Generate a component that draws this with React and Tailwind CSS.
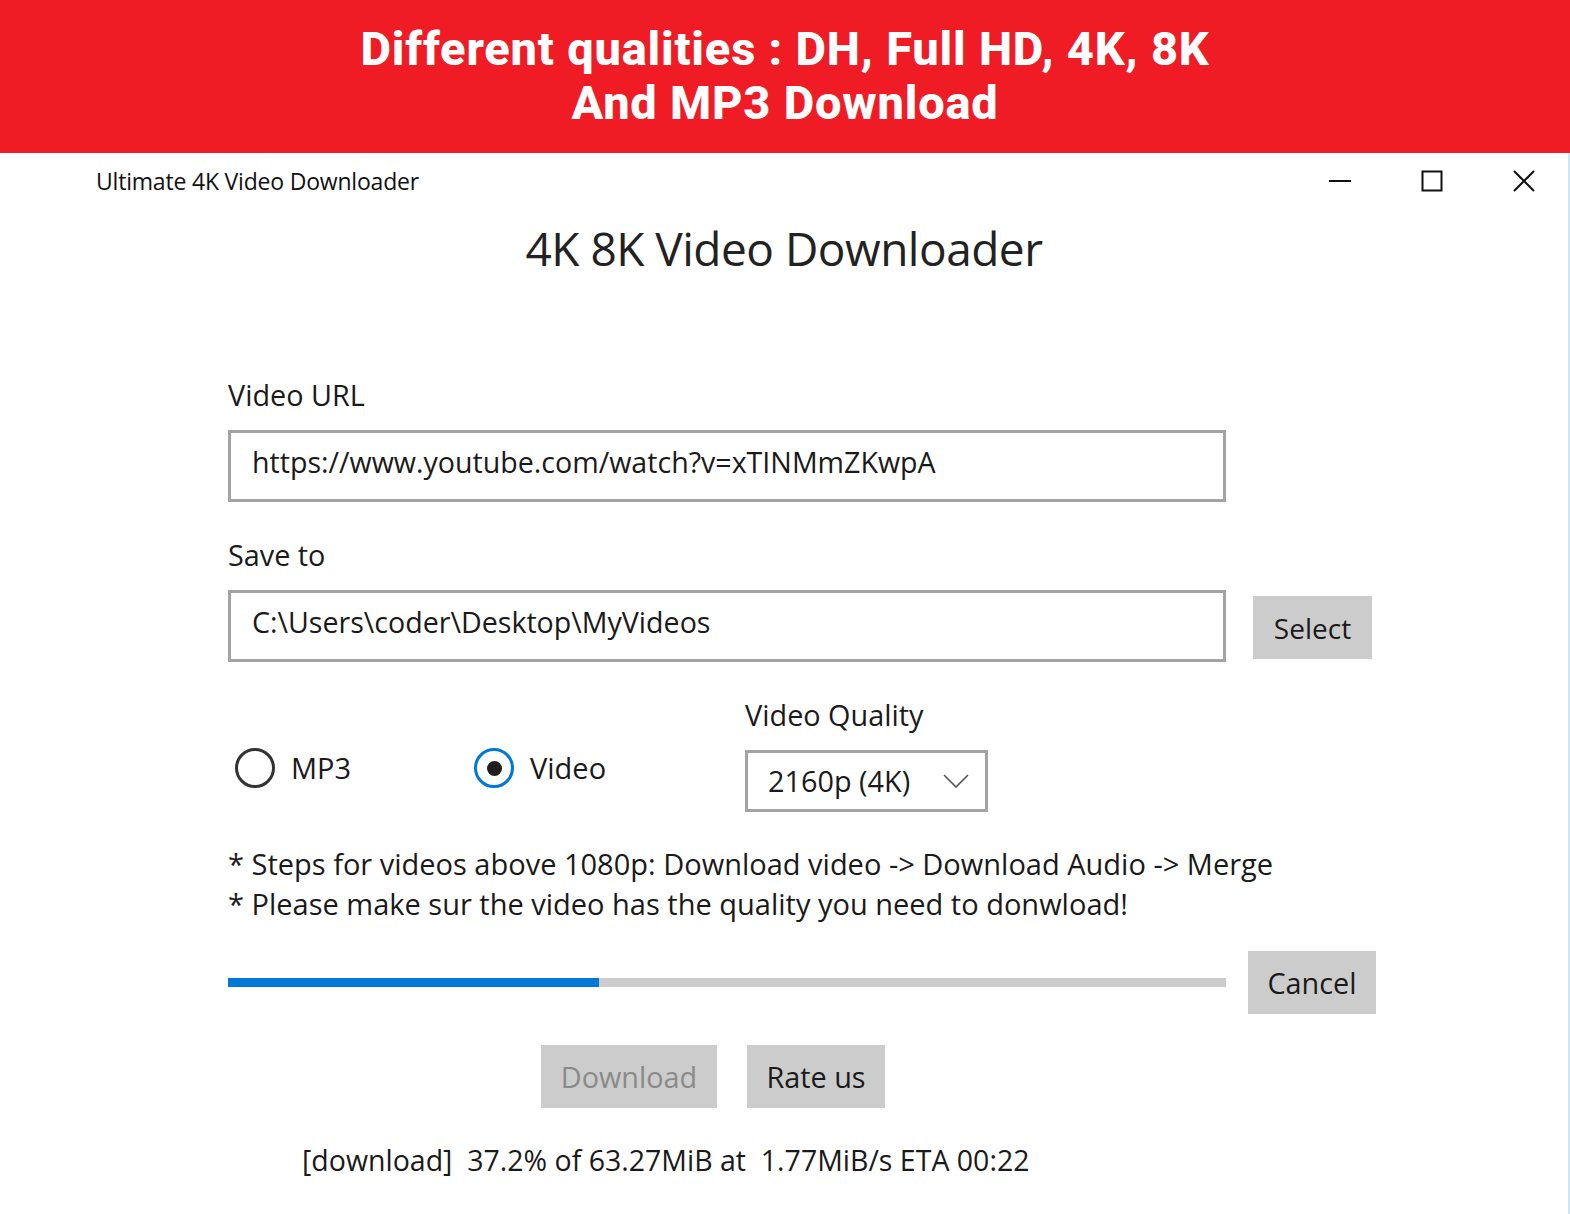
import React, { useState } from "react";

const Radio = ({ checked, label, onClick }) => (
  <label onClick={onClick} className="flex items-center gap-[16px] cursor-pointer">
    <span
      className={`${
        checked ? "border-[#0078d7]" : "border-[#333333]"
      } w-[40px] h-[40px] rounded-full border-[3px] flex items-center justify-center bg-white`}
    >
      {checked && <span className="w-[15px] h-[15px] rounded-full bg-[#1f1f1f]" />}
    </span>
    <span className="text-[29px] text-[#1a1a1a]">{label}</span>
  </label>
);

const App = () => {
  const [format, setFormat] = useState("video");
  const progress = 37.2;

  return (
    <div className="w-[1570px] h-[1214px] bg-white font-['Open_Sans','Noto_Sans',sans-serif] text-[#1a1a1a] overflow-hidden">
      {/* banner */}
      <div className="h-[153px] bg-[#ef1c26] flex flex-col items-center justify-center pb-[2px]">
        <div className="text-white font-['Roboto',sans-serif] font-extrabold text-[47px] leading-[54px] text-center tracking-[0.8px]">
          Different qualities : DH, Full HD, 4K, 8K
          <br />
          And MP3 Download
        </div>
      </div>

      {/* window */}
      <div className="h-[1061px] border-r-2 border-[#cde6f5] flex flex-col">
        {/* title bar */}
        <div className="h-[56px] flex items-center justify-between pl-[96px] pr-[33px]">
          <span className="text-[23px] tracking-[-0.2px] text-[#111]">Ultimate 4K Video Downloader</span>
          <div className="flex items-center gap-[70px] text-[#111]">
            <svg width="22" height="22" viewBox="0 0 22 22">
              <path d="M0 11h22" stroke="currentColor" strokeWidth="2" />
            </svg>
            <svg width="22" height="22" viewBox="0 0 22 22">
              <rect x="1.5" y="1.5" width="19" height="19" fill="none" stroke="currentColor" strokeWidth="2" />
            </svg>
            <svg width="22" height="22" viewBox="0 0 22 22">
              <path d="M1 1l20 20M21 1L1 21" stroke="currentColor" strokeWidth="2" />
            </svg>
          </div>
        </div>

        {/* heading */}
        <h1 className="mt-[9px] text-center text-[46px] leading-[60px] text-[#222] tracking-[-0.5px]">
          4K 8K Video Downloader
        </h1>

        <div className="pl-[228px] flex flex-col">
          {/* url */}
          <div className="mt-[97px] text-[28.8px] leading-[40px]">Video URL</div>
          <div className="mt-[15px] w-[998px] h-[72px] border-[3px] border-[#a3a3a3] flex items-start pl-[21px] pt-[9px] text-[28.6px] leading-[40px]">
            https://www.youtube.com/watch?v=xTINMmZKwpA
          </div>

          {/* save to */}
          <div className="mt-[33px] text-[28.8px] leading-[40px]">Save to</div>
          <div className="mt-[15px] flex items-start gap-[27px]">
            <div className="w-[998px] h-[72px] border-[3px] border-[#a3a3a3] flex items-start pl-[21px] pt-[9px] text-[28.6px] leading-[40px]">
              C:\Users\coder\Desktop\MyVideos
            </div>
            <button className="mt-[6px] w-[119px] h-[63px] bg-[#cccccc] text-[28px] text-[#1a1a1a]">Select</button>
          </div>

          {/* format & quality */}
          <div className="mt-[33px] flex items-end">
            <div className="flex items-center gap-[64px] h-[62px] pl-[7px] -translate-y-[13px]">
              <div className="w-[175px]">
                <Radio checked={format === "mp3"} label="MP3" onClick={() => setFormat("mp3")} />
              </div>
              <Radio checked={format === "video"} label="Video" onClick={() => setFormat("video")} />
            </div>
            <div className="ml-[139px] flex flex-col">
              <div className="text-[28.8px] leading-[40px]">Video Quality</div>
              <div className="mt-[15px] w-[243px] h-[62px] border-[3px] border-[#a3a3a3] flex items-center justify-between pl-[20px] pr-[16px]">
                <span className="text-[28.8px] leading-[40px]">2160p (4K)</span>
                <svg width="26" height="14" viewBox="0 0 26 14" className="text-[#555]">
                  <path d="M1 1l12 12L25 1" fill="none" stroke="currentColor" strokeWidth="1.6" />
                </svg>
              </div>
            </div>
          </div>

          {/* notes */}
          <div className="mt-[32px] text-[29px] leading-[40px]">
            <div>* Steps for videos above 1080p: Download video -&gt; Download Audio -&gt; Merge</div>
            <div>* Please make sur the video has the quality you need to donwload!</div>
          </div>

          {/* progress */}
          <div className="mt-[27px] flex items-center gap-[22px]">
            <div className="w-[998px] h-[9px] bg-[#cccccc]">
              <div className="h-full bg-[#0078d7]" style={{ width: `${progress}%` }} />
            </div>
            <button className="w-[128px] h-[63px] bg-[#cccccc] text-[28.8px] text-[#1a1a1a]">Cancel</button>
          </div>

          {/* actions */}
          <div className="mt-[31px] ml-[313px] flex gap-[30px]">
            <button className="w-[176px] h-[63px] bg-[#cccccc] text-[28.8px] text-[#8a8a8a]">Download</button>
            <button className="w-[138px] h-[63px] bg-[#cccccc] text-[28.8px] text-[#1a1a1a]">Rate us</button>
          </div>

          {/* status */}
          <div className="mt-[32px] ml-[74px] text-[28.5px] leading-[40px] whitespace-pre">
            [download]  37.2% of 63.27MiB at  1.77MiB/s ETA 00:22
          </div>
        </div>
      </div>
    </div>
  );
};

export default App;
